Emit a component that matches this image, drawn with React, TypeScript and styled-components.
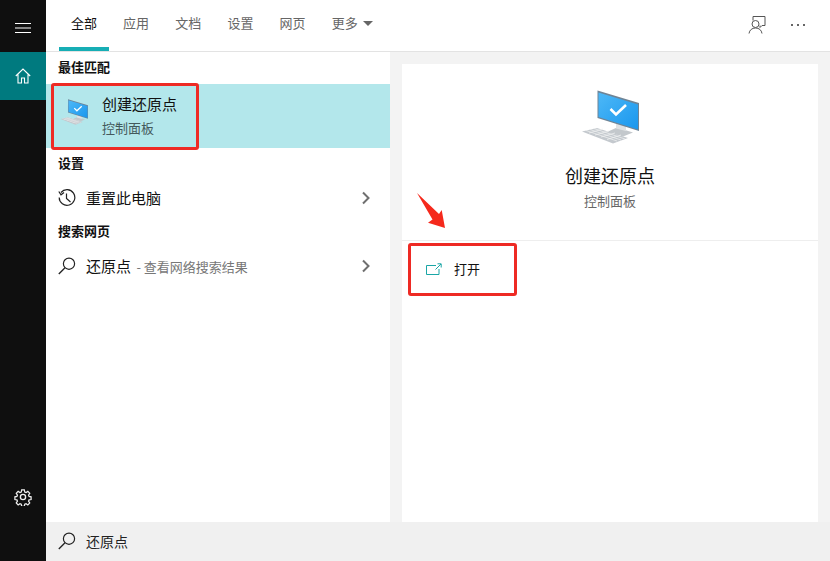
import React from "react";
import styled, { createGlobalStyle } from "styled-components";

const GlobalStyle = createGlobalStyle`
  html, body {
    margin: 0;
    padding: 0;
    background: #f3f3f3;
    font-family: "Noto Sans CJK SC", "Liberation Sans", sans-serif;
  }
`;

const TABS = ["全部", "应用", "文档", "设置", "网页"];

const MonitorIcon: React.FC<{ width: number; height: number; id: string }> = ({ width, height, id }) => (
  <svg width={width} height={height} viewBox="0 0 58 54">
    <defs>
      <linearGradient id={id} x1="0" y1="0" x2="1" y2="1">
        <stop offset="0" stopColor="#4db8f7" />
        <stop offset="1" stopColor="#1a97ee" />
      </linearGradient>
    </defs>
    <polygon points="26,42 36,37.500 52,42.500 42,46.500" fill="#c3c8cc" />
    <polygon points="35,33 45,36 45,41 35,38.500" fill="#dfe2e4" />
    <polygon points="16.500,0.500 58,13 58,41 16.500,28" fill="#6f8496" />
    <polygon points="17.500,2.500 57,14.500 57,39.500 17.500,27" fill={`url(#${id})`} />
    <path d="M29.500 19 L35 24.500 L45 15" fill="none" stroke="#fff" strokeWidth="2.600" />
    <polygon points="1,41.500 16,38 47,48 32,53.500" fill="#c4c9ce" />
    <path
      d="M5 40.500 L36 51 M9 39.500 L40 50 M13 38.500 L44 49 M8 43 L22 39 M14 45 L28 41 M20 47 L34 43 M26 49.500 L40 45"
      fill="none"
      stroke="#f2f3f4"
      strokeWidth="0.700"
    />
  </svg>
);

const SearchIcon: React.FC = () => (
  <svg width="18" height="18" viewBox="0 0 18 18">
    <circle cx="11" cy="6.700" r="5.600" fill="none" stroke="#222" strokeWidth="1.200" />
    <line x1="7" y1="10.800" x2="0.800" y2="17" stroke="#222" strokeWidth="1.300" />
  </svg>
);

const Chevron: React.FC = () => (
  <svg width="10" height="14" viewBox="0 0 10 14">
    <path d="M2 1.500 L7.500 7 L2 12.500" fill="none" stroke="#6f6f6f" strokeWidth="2" />
  </svg>
);

const App: React.FC = () => (
  <>
    <GlobalStyle />
    <Frame>
      <Sidebar>
        <MenuButton>
          <svg width="16" height="10" viewBox="0 0 16 10">
            <path d="M0 .5H16M0 5H16M0 9.500H16" stroke="#fff" strokeWidth="1" />
          </svg>
        </MenuButton>
        <HomeButton>
          <svg width="16" height="16" viewBox="0 0 16 16">
            <path
              d="M.8 8 L8 1 L15.200 8 M3 6.500 V15 H6.500 V10 H9.500 V15 H13 V6.500"
              fill="none"
              stroke="#fff"
              strokeWidth="1.100"
            />
          </svg>
        </HomeButton>
        <Spacer />
        <SettingsButton>
          <svg width="18" height="18" viewBox="0 0 24 24" fill="none" stroke="#f0f0f0" strokeWidth="1.800">
            <circle cx="12" cy="12" r="3.500" />
            <path d="M10 1.500h4l.6 3.200 1.900.8 2.700-1.800 2.800 2.800-1.800 2.700.8 1.900 3 .6v4l-3 .6-.8 1.900 1.800 2.700-2.800 2.800-2.700-1.800-1.900.8-.6 3h-4l-.6-3-1.900-.8-2.700 1.800-2.800-2.800 1.800-2.700-.8-1.900-3-.6v-4l3-.6.8-1.900-1.800-2.700 2.800-2.800 2.700 1.800 1.900-.8z" transform="translate(1.200 1.200) scale(.9)" />
          </svg>
        </SettingsButton>
      </Sidebar>

      <Main>
        <TopBar>
          <TabList>
            {TABS.map((tab, i) => (
              <Tab key={tab} $active={i === 0}>
                {tab}
              </Tab>
            ))}
            <Tab $active={false}>
              更多
              <Caret />
            </Tab>
          </TabList>
          <TopActions>
            <svg width="18" height="18" viewBox="0 0 18 18" fill="none" stroke="#555" strokeWidth="1">
              <path d="M5 4.500V.5H17V9.500H14L12 11.500V9.500" />
              <circle cx="7.500" cy="8" r="3.500" />
              <path d="M1 17.500C1.500 14 4 12 7.500 12S13.500 14 14 17.500" />
            </svg>
            <Dots>
              <Dot />
              <Dot />
              <Dot />
            </Dots>
          </TopActions>
        </TopBar>

        <Content>
          <ResultsPanel>
            <SectionTitle>最佳匹配</SectionTitle>
            <BestMatch>
              <BestIcon>
                <MonitorIcon id="monitor-small" width={28} height={26} />
              </BestIcon>
              <BestText>
                <BestName>创建还原点</BestName>
                <BestKind>控制面板</BestKind>
              </BestText>
            </BestMatch>
            <SectionTitle>设置</SectionTitle>
            <ResultRow>
              <svg width="18" height="18" viewBox="0 0 18 18" fill="none" stroke="#222" strokeWidth="1.200">
                <path d="M3 3.500A7.800 7.800 0 1 1 1.200 8.500" />
                <path d="M.8 2.500L3 5.800L6 3.500" />
                <path d="M8.500 4.500V9.500L12.500 13" />
              </svg>
              <RowLabel>重置此电脑</RowLabel>
              <Chevron />
            </ResultRow>
            <SectionTitle>搜索网页</SectionTitle>
            <ResultRow>
              <SearchIcon />
              <RowLabel>
                还原点 <RowHint>- 查看网络搜索结果</RowHint>
              </RowLabel>
              <Chevron />
            </ResultRow>
          </ResultsPanel>

          <DetailColumn>
            <DetailPanel>
              <DetailHead>
                <MonitorIcon id="monitor-large" width={58} height={54} />
                <DetailName>创建还原点</DetailName>
                <DetailKind>控制面板</DetailKind>
              </DetailHead>
              <OpenRow>
                <svg width="16" height="12" viewBox="0 0 16 12" fill="none" stroke="#1aa6a6" strokeWidth="1">
                  <path d="M10 2.500H.5V11.500H13V6" />
                  <path d="M9.500 6.500L15 1M11.500 .8H15.200V4.500" />
                </svg>
                <OpenLabel>打开</OpenLabel>
              </OpenRow>
            </DetailPanel>
          </DetailColumn>
        </Content>

        <SearchBar>
          <SearchIcon />
          <SearchText>还原点</SearchText>
        </SearchBar>
      </Main>

      <Highlight $left={51} $top={83} $width={148} $height={67} />
      <Highlight $left={408} $top={243} $width={109} $height={53} />
      <Arrow width="32" height="38" viewBox="0 0 32 38">
        <polygon points="1,1 23,22 25.700,18 29,36 12,30.700 16.500,27.500" fill="#f5291c" />
      </Arrow>
    </Frame>
  </>
);

export default App;

const Frame = styled.div`
  position: relative;
  display: flex;
  width: 830px;
  height: 561px;
  overflow: hidden;
`;

const Sidebar = styled.nav`
  display: flex;
  flex-direction: column;
  width: 46px;
  flex-shrink: 0;
  background: #0f0f0f;
`;

const SideButton = styled.div`
  display: flex;
  align-items: center;
  justify-content: center;
  height: 48px;
  padding-right: 1px;
`;

const MenuButton = styled(SideButton)`
  height: 52px;
  padding-top: 4px;
  box-sizing: border-box;
`;

const HomeButton = styled(SideButton)`
  background: #007a7f;
`;

const SettingsButton = styled(SideButton)`
  height: 48px;
  margin-bottom: 40px;
`;

const Spacer = styled.div`
  flex: 1;
`;

const Main = styled.div`
  display: flex;
  flex-direction: column;
  flex: 1;
  min-width: 0;
`;

const TopBar = styled.header`
  display: flex;
  align-items: stretch;
  justify-content: space-between;
  height: 52px;
  box-sizing: border-box;
  background: #fff;
  border-bottom: 1px solid #e3e3e3;
`;

const TabList = styled.div`
  display: flex;
  padding-left: 13px;
`;

const Tab = styled.div<{ $active: boolean }>`
  display: flex;
  align-items: center;
  gap: 5px;
  height: 51px;
  box-sizing: border-box;
  width: ${({ $active }) => ($active ? "50px" : "auto")};
  margin-right: ${({ $active }) => ($active ? "14px" : "26.200px")};
  padding: 0 0 3px;
  justify-content: center;
  font-size: 13px;
  color: ${({ $active }) => ($active ? "#111" : "#666")};
  border-bottom: 4px solid ${({ $active }) => ($active ? "#17aeb5" : "transparent")};
`;

const Caret = styled.span`
  width: 0;
  height: 0;
  margin-top: 2px;
  border-left: 5px solid transparent;
  border-right: 5px solid transparent;
  border-top: 5px solid #666;
`;

const TopActions = styled.div`
  display: flex;
  align-items: center;
  gap: 25px;
  padding: 0 25px 2px 0;
`;

const Dots = styled.div`
  display: flex;
  gap: 4px;
`;

const Dot = styled.span`
  width: 2px;
  height: 2px;
  background: #666;
`;

const Content = styled.div`
  display: flex;
  flex: 1;
  min-height: 0;
`;

const ResultsPanel = styled.section`
  width: 344px;
  flex-shrink: 0;
  background: #fff;
`;

const SectionTitle = styled.h3`
  display: flex;
  align-items: center;
  height: 32px;
  box-sizing: border-box;
  margin: 0;
  padding: 0 0 3px 12px;
  font-size: 13px;
  font-weight: 700;
  color: #111;
`;

const BestMatch = styled.div`
  display: flex;
  align-items: center;
  gap: 14px;
  height: 64px;
  padding-left: 14px;
  background: #b3e7eb;
`;

const BestIcon = styled.div`
  display: flex;
  margin-bottom: 8px;
`;

const BestText = styled.div`
  display: flex;
  flex-direction: column;
  gap: 5px;
  margin-top: -2px;
`;

const BestName = styled.div`
  font-size: 15px;
  line-height: 20px;
  color: #111;
`;

const BestKind = styled.div`
  font-size: 13px;
  line-height: 18px;
  color: #44595c;
`;

const ResultRow = styled.div`
  display: flex;
  align-items: center;
  gap: 10px;
  height: 36px;
  box-sizing: border-box;
  padding: 0 19px 1px 12px;
`;

const RowLabel = styled.div`
  flex: 1;
  font-size: 15px;
  color: #111;
`;

const RowHint = styled.span`
  margin-left: 2px;
  font-size: 13px;
  color: #777;
`;

const DetailColumn = styled.div`
  flex: 1;
  padding: 12px 12px 0;
`;

const DetailPanel = styled.section`
  height: 100%;
  background: #fff;
`;

const DetailHead = styled.div`
  display: flex;
  flex-direction: column;
  align-items: center;
  height: 177px;
  padding-top: 26px;
  box-sizing: border-box;
  border-bottom: 1px solid #eeeeee;
`;

const DetailName = styled.div`
  margin-top: 18px;
  font-size: 18px;
  line-height: 26px;
  color: #111;
`;

const DetailKind = styled.div`
  margin-top: 4px;
  font-size: 13px;
  line-height: 18px;
  color: #666;
`;

const OpenRow = styled.div`
  display: flex;
  align-items: center;
  gap: 12px;
  height: 55px;
  padding-left: 24px;
`;

const OpenLabel = styled.span`
  font-size: 13px;
  color: #111;
`;

const SearchBar = styled.footer`
  display: flex;
  align-items: center;
  gap: 10px;
  height: 39px;
  padding: 0 0 2px 12px;
  box-sizing: border-box;
  background: #f0f0f0;
`;

const SearchText = styled.span`
  font-size: 14px;
  color: #222;
`;

const Highlight = styled.div<{ $left: number; $top: number; $width: number; $height: number }>`
  position: absolute;
  left: ${({ $left }) => $left}px;
  top: ${({ $top }) => $top}px;
  width: ${({ $width }) => $width}px;
  height: ${({ $height }) => $height}px;
  box-sizing: border-box;
  border: 3px solid #ee2a24;
  border-radius: 3px;
`;

const Arrow = styled.svg`
  position: absolute;
  left: 416px;
  top: 192px;
`;
